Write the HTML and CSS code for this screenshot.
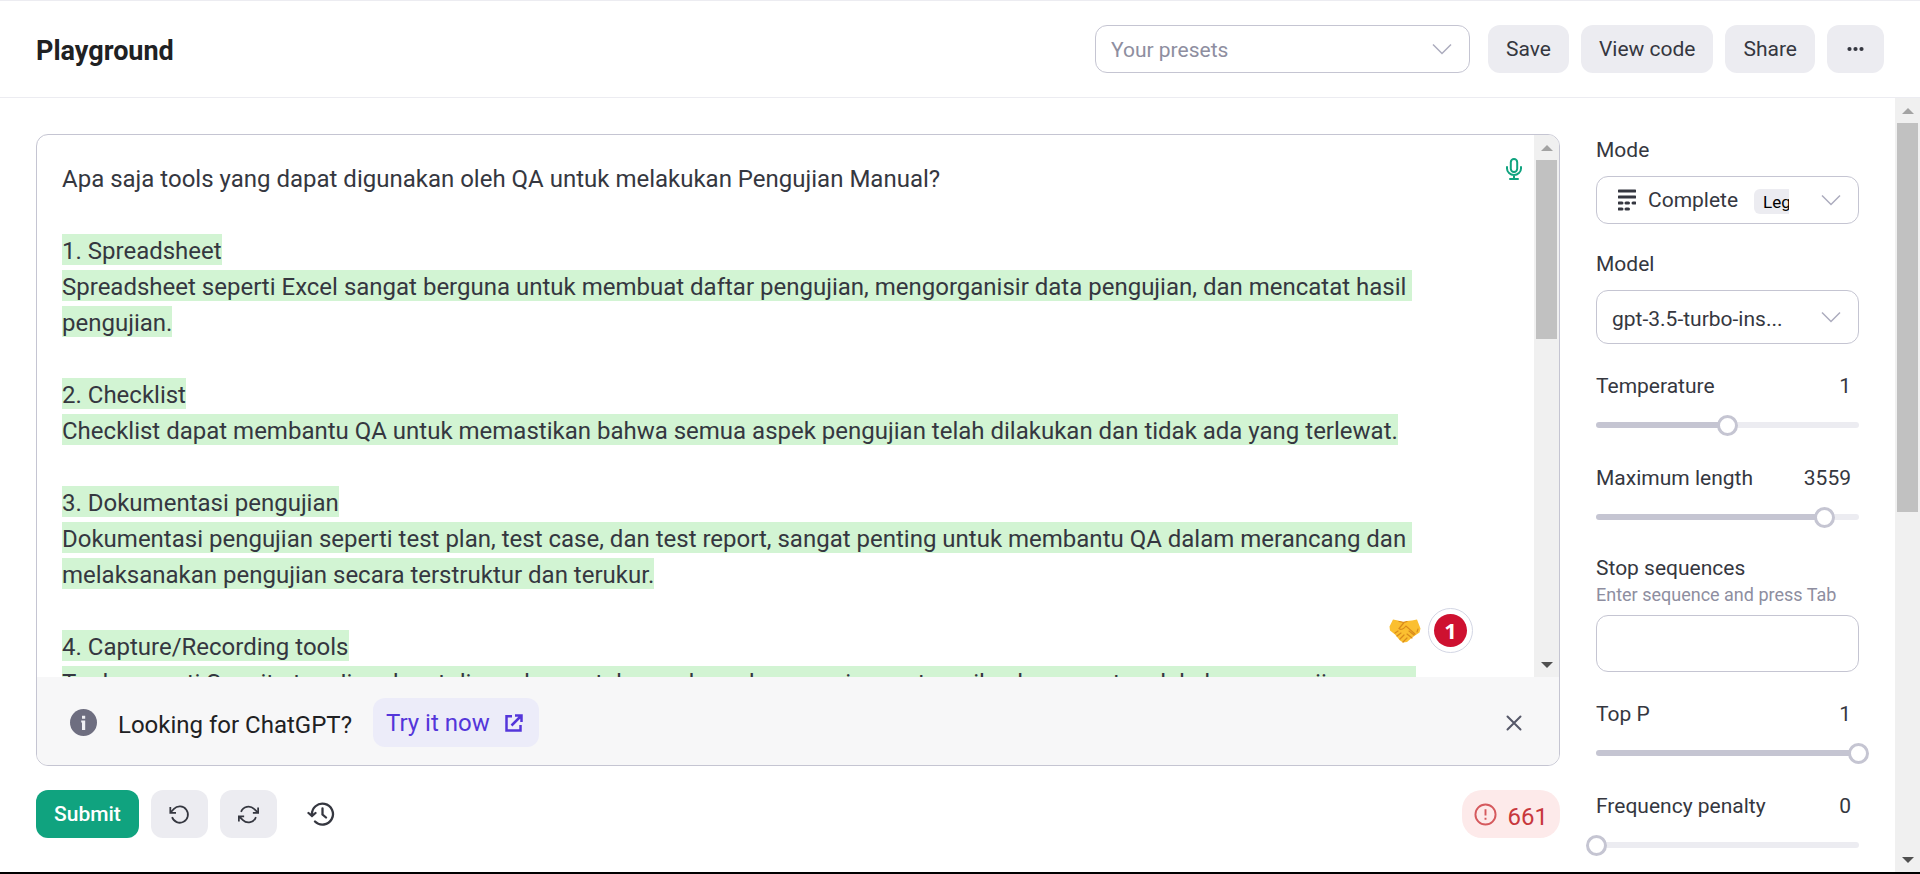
FILE: index.html
```html
<!DOCTYPE html>
<html lang="id">
<head>
<meta charset="utf-8">
<title>Playground</title>
<link rel="stylesheet" href="styles.css">
</head>
<body>
<header class="topbar">
  <h1 class="title">Playground</h1>
  <div class="field presets">
    <select class="select placeholder" aria-label="Your presets"><option>Your presets</option></select>
    <div class="adorn"><svg class="chevron" viewBox="0 0 20 12"><path d="M1 1.5 10 10.5 19 1.5"/></svg></div>
  </div>
  <div class="actions">
    <button class="btn">Save</button>
    <button class="btn">View code</button>
    <button class="btn">Share</button>
    <button class="btn" aria-label="More"><svg class="dots" viewBox="0 0 21 6"><circle cx="4.500" cy="3" r="2.100"/><circle cx="10.500" cy="3" r="2.100"/><circle cx="16.500" cy="3" r="2.100"/></svg></button>
  </div>
</header>
<div class="body">
  <main class="workspace">
    <section class="editor">
      <div class="scroller">
        <div class="text" role="textbox" aria-multiline="true" aria-label="Prompt" contenteditable="true" spellcheck="false">Apa saja tools yang dapat digunakan oleh QA untuk melakukan Pengujian Manual?

<mark>1. Spreadsheet
Spreadsheet seperti Excel sangat berguna untuk membuat daftar pengujian, mengorganisir data pengujian, dan mencatat hasil pengujian.

2. Checklist
Checklist dapat membantu QA untuk memastikan bahwa semua aspek pengujian telah dilakukan dan tidak ada yang terlewat.

3. Dokumentasi pengujian
Dokumentasi pengujian seperti test plan, test case, dan test report, sangat penting untuk membantu QA dalam merancang dan melaksanakan pengujian secara terstruktur dan terukur.

4. Capture/Recording tools
Tools seperti Snagit atau Jing dapat digunakan untuk merekam dan menyimpan tampilan layar saat melakukan pengujian yang </mark></div>
        <button class="mic" aria-label="Record"><svg viewBox="0 0 16 22"><rect x="4.800" y="1" width="6.400" height="13" rx="3.200"/><path d="M1 9v1.500a7 6.500 0 0 0 14 0V9M8 17v4M4 21h8"/></svg></button>
        <div class="assist">
          <svg class="hands" viewBox="0 0 32 24"><path d="M4 .5 9 1.500 14 3l4-1 5-.5 5-1 3.500 9-1 4-4.500 3-4 3-4 3.500-4 .5-3-2-5-6-5-4-.5-4Z" fill="#fbbf30"/><path d="m15 3.500-5 6c2 2 5 0 7-2.500l9 8M6 14l3-2M8 17l4-3M11 20l4-4M14 23l4-4M18 15l5 4M20 12l5 4M18 2.500l-3 1-5-1M28 13l1-3" fill="none" stroke="#d98a1c" stroke-width="1.200" stroke-linecap="round"/></svg>
          <span class="ring"><span class="count">1</span></span>
        </div>
        <div class="scrollbar" aria-hidden="true">
          <span class="arrow up"></span><span class="thumb short"></span><span class="arrow down"></span>
        </div>
      </div>
      <div class="banner">
        <svg class="info" viewBox="0 0 27 27"><circle cx="13.500" cy="13.500" r="13.500" fill="#6e6e80"/><path d="M12 6.800h3.200v3H12zM11.200 11.500h4V21H12v-7.500h-.8z" fill="#f0f0f4"/></svg>
        <span class="ask">Looking for ChatGPT?</span>
        <a class="try" href="#">Try it now
          <svg viewBox="0 0 18 18"><path d="M7 2.200H1.500v14.300H15.500V11M10 1.500h6.500V8M16 2 6.500 11.500"/></svg>
        </a>
        <button class="close" aria-label="Close"><svg viewBox="0 0 16 16"><path d="m1.500 1.500 13 13M14.500 1.500l-13 13"/></svg></button>
      </div>
    </section>
    <div class="controls">
      <button class="btn primary">Submit</button>
      <button class="btn icon" aria-label="Undo"><svg viewBox="0 0 24 24"><path d="M1.500 3.500V10H8M3.510 15a9.300 9.300 0 1 0 2.130-9.360L1.500 10"/></svg></button>
      <button class="btn icon" aria-label="Regenerate"><svg viewBox="0 0 24 24"><path d="M23 4v6h-6M1 20v-6h6M3.510 9a9 9 0 0 1 14.850-3.360L23 10M1 14l4.640 4.360A9 9 0 0 0 20.490 15"/></svg></button>
      <button class="history" aria-label="History"><svg viewBox="0 0 28 24"><path d="M5 13A10.500 10.500 0 1 1 8 19.500M1.500 11 5 14 8.500 11M15.500 6.500v6l3.500 3"/></svg></button>
      <div class="tokens"><svg viewBox="0 0 24 24"><circle cx="12" cy="12" r="10.500"/><path d="M12 6.500v6.500M12 15.300v2.200"/></svg><span>661</span></div>
    </div>
  </main>
  <aside class="settings">
    <div class="group">
      <label class="label" for="mode">Mode</label>
      <div class="field">
        <select class="select with-icon" id="mode"><option>Complete</option></select>
        <div class="adorn mode">
          <svg class="lines" viewBox="0 0 18 22"><path d="M1 2h16M1 8h16"/><path d="M1 14h3M8 14h2.500M15 14h2M1 20h3M8 20h2.500"/></svg>
          <span class="clip"><span class="legacy">Legacy</span></span>
          <svg class="chevron" viewBox="0 0 20 12"><path d="M1 1.500 10 10.500 19 1.500"/></svg>
        </div>
      </div>
    </div>
    <div class="group">
      <label class="label" for="model">Model</label>
      <div class="field">
        <select class="select tall" id="model"><option>gpt-3.5-turbo-ins...</option></select>
        <div class="adorn"><svg class="chevron" viewBox="0 0 20 12"><path d="M1 1.500 10 10.500 19 1.500"/></svg></div>
      </div>
    </div>
    <div class="group range">
      <div class="row"><label class="label" for="temp">Temperature</label><input class="value" value="1" aria-label="Temperature value"></div>
      <div class="slider"><span class="rail" style="--fill:50%"></span><input id="temp" type="range" min="0" max="2" step="0.01" value="1"></div>
    </div>
    <div class="group range">
      <div class="row"><label class="label" for="len">Maximum length</label><input class="value" value="3559" aria-label="Maximum length value"></div>
      <div class="slider"><span class="rail" style="--fill:87%"></span><input id="len" type="range" min="1" max="4095" value="3559"></div>
    </div>
    <div class="group">
      <label class="label" for="stop">Stop sequences</label>
      <div class="hint">Enter sequence and press Tab</div>
      <input class="stop" id="stop" type="text">
    </div>
    <div class="group range">
      <div class="row"><label class="label" for="topp">Top P</label><input class="value" value="1" aria-label="Top P value"></div>
      <div class="slider"><span class="rail" style="--fill:100%"></span><input id="topp" type="range" min="0" max="1" step="0.01" value="1"></div>
    </div>
    <div class="group range">
      <div class="row"><label class="label" for="freq">Frequency penalty</label><input class="value" value="0" aria-label="Frequency penalty value"></div>
      <div class="slider"><span class="rail" style="--fill:0%"></span><input id="freq" type="range" min="0" max="2" step="0.01" value="0"></div>
    </div>
  </aside>
  <div class="scrollbar" aria-hidden="true">
    <span class="arrow up"></span><span class="thumb"></span><span class="arrow down"></span>
  </div>
</div>
</body>
</html>
```
FILE: styles.css
```css
* { box-sizing: border-box; }
body {
  margin: 0;
  height: 100vh;
  display: flex;
  flex-direction: column;
  overflow: hidden;
  border-top: 1px solid #ececf1;
  border-bottom: 2px solid #000;
  background: #fff;
  color: #353740;
  font: 21px/24px Roboto, "Liberation Sans", sans-serif;
}
button, input, select { font: inherit; color: inherit; margin: 0; }
button { border: 0; background: none; cursor: pointer; }
svg { display: block; flex: none; }

.topbar {
  display: flex;
  align-items: center;
  flex: none;
  padding: 24px 36px;
  border-bottom: 1px solid #ececf1;
}
.title { margin: 0 auto 0 0; padding-top: 4px; font-size: 27px; line-height: 32px; font-weight: 700; color: #202123; }

.field { display: grid; align-items: center; }
.field > * { grid-area: 1 / 1; }
.presets { width: 375px; margin-right: 18px; }
.select {
  appearance: none;
  width: 100%;
  height: 48px;
  padding: 0 72px 0 15px;
  border: 1px solid #c5c5d2;
  border-radius: 12px;
  background: #fff;
  text-overflow: ellipsis;
}
.select.placeholder { padding-top: 2px; color: #8e8ea0; }
.select.with-icon { padding-left: 51px; padding-right: 0; }
.select.tall { height: 54px; padding-top: 3px; }
.adorn { display: flex; align-items: center; justify-content: flex-end; padding: 0 18px; pointer-events: none; }
.adorn.mode { padding-left: 22px; }
.chevron { width: 20px; height: 12px; fill: none; stroke: #acacbe; stroke-width: 1.5; }
.lines { width: 18px; height: 22px; fill: none; stroke: #353740; stroke-width: 3; stroke-linecap: round; }
.clip { width: 35px; margin: 2px 32px 0 auto; overflow: hidden; }
.legacy { display: block; width: 74px; padding: 1px 9px 0; border-radius: 6px; background: #ececf1; color: #000; font-size: 17px; }

.actions { display: flex; gap: 12px; }
.btn {
  height: 48px;
  padding: 0 18px;
  border-radius: 12px;
  background: #ececf1;
}
.dots { width: 21px; height: 6px; fill: #353740; }

.body { flex: 1; display: flex; min-height: 0; }
.workspace { flex: 1; min-width: 0; display: flex; flex-direction: column; gap: 24px; padding: 36px 0 34px 36px; }
.editor {
  flex: 1;
  min-height: 0;
  display: flex;
  flex-direction: column;
  border: 1px solid #c5c5d2;
  border-radius: 12px;
  overflow: hidden;
}
.scroller { position: relative; flex: 1; min-height: 0; display: flex; }
.text {
  flex: 1;
  overflow: hidden;
  padding: 26px 80px 0 25px;
  font-size: 24px;
  line-height: 36px;
  white-space: pre-wrap;
  outline: none;
}
mark { padding: 3px 0 0; background: #d2f4d3; color: inherit; }
.mic { position: absolute; top: 23px; right: 37px; padding: 0; }
.mic svg { width: 16px; height: 22px; fill: none; stroke: #10a37f; stroke-width: 2; stroke-linecap: round; }
.assist { position: absolute; right: 86px; bottom: 24px; display: flex; align-items: center; gap: 7px; }
.hands { width: 32px; height: 24px; }
.ring { display: block; padding: 5px; border: 1px solid #d3d6e4; border-radius: 50%; background: #fff; }
.count { display: block; width: 33px; border-radius: 50%; background: #ce1130; color: #fff; font: 700 22px/33px "Open Sans", sans-serif; text-align: center; }

.scrollbar { flex: none; width: 25px; display: flex; flex-direction: column; align-items: center; background: #f0f0f0; }
.thumb { width: 21px; height: 389px; background: #c1c1c1; }
.thumb.short { height: 179px; }
.arrow { flex: none; height: 25px; display: flex; align-items: center; }
.arrow::before { content: ""; border: 6px solid transparent; }
.arrow.up::before { border-top: 0; border-bottom-color: #a3a3a3; }
.arrow.down { margin-top: auto; }
.arrow.down::before { border-bottom: 0; border-top-color: #505050; }

.banner {
  flex: none;
  display: flex;
  align-items: center;
  padding: 21px 37px 18px 33px;
  background: #f7f7f8;
  font-size: 24px;
}
.info { width: 27px; height: 27px; }
.ask { margin: 4px 21px 0 21px; color: #202123; }
.try {
  display: flex;
  align-items: center;
  gap: 15px;
  height: 49px;
  padding: 0 16px 0 13px;
  border-radius: 12px;
  background: #ececf9;
  color: #5436da;
  text-decoration: none;
}
.try svg { width: 18px; height: 18px; fill: none; stroke: #5436da; stroke-width: 2.5; }
.close { margin-left: auto; padding: 0; }
.close svg { width: 16px; height: 16px; fill: none; stroke: #565869; stroke-width: 2; stroke-linecap: round; }

.controls { display: flex; align-items: center; gap: 12px; }
.primary { background: #10a37f; color: #fff; font-weight: 500; }
.icon svg { width: 21px; height: 21px; fill: none; stroke: #353740; stroke-width: 2; }
.history { margin-left: 18px; padding: 0; }
.history svg { width: 28px; height: 24px; fill: none; stroke: #353740; stroke-width: 2.3; stroke-linecap: round; }
.tokens {
  display: flex;
  align-items: center;
  gap: 11px;
  height: 48px;
  margin-left: auto;
  padding: 0 12px;
  border-radius: 20px;
  background: #fdeaea;
  color: #c8373c;
  font-size: 24px;
}
.tokens svg { width: 23px; height: 23px; fill: none; stroke: #d5595d; stroke-width: 2; }
.tokens span { padding-top: 5px; }

.settings { flex: none; width: 335px; padding: 40px 36px 0; }
.group { margin-bottom: 28px; }
.group + .group.range { margin-top: 30px; }
.label { display: block; }
.field { margin-top: 14px; }
.topbar .field { margin-top: 0; }
.row { display: flex; align-items: center; justify-content: space-between; }
.value { width: 72px; height: 24px; padding: 0 8px 0 0; border: 0; background: none; text-align: right; }
.slider { display: grid; align-items: center; margin-top: 16px; }
.slider > * { grid-area: 1 / 1; }
.rail { height: 6px; border-radius: 3px; background: linear-gradient(to right, #c5c5d2 var(--fill), #ececf1 var(--fill)); }
.slider input { appearance: none; width: calc(100% + 20px); height: 22px; margin: 0 -10px; background: none; }
.slider input::-webkit-slider-thumb {
  appearance: none;
  width: 21px;
  height: 21px;
  border: 3px solid #c5c5d2;
  border-radius: 50%;
  background: #fff;
}
.hint { margin: 3px 0 8px; color: #8e8ea0; font-size: 18px; }
.stop { display: block; width: 100%; height: 57px; padding: 0 15px; border: 1px solid #c5c5d2; border-radius: 12px; }
```
